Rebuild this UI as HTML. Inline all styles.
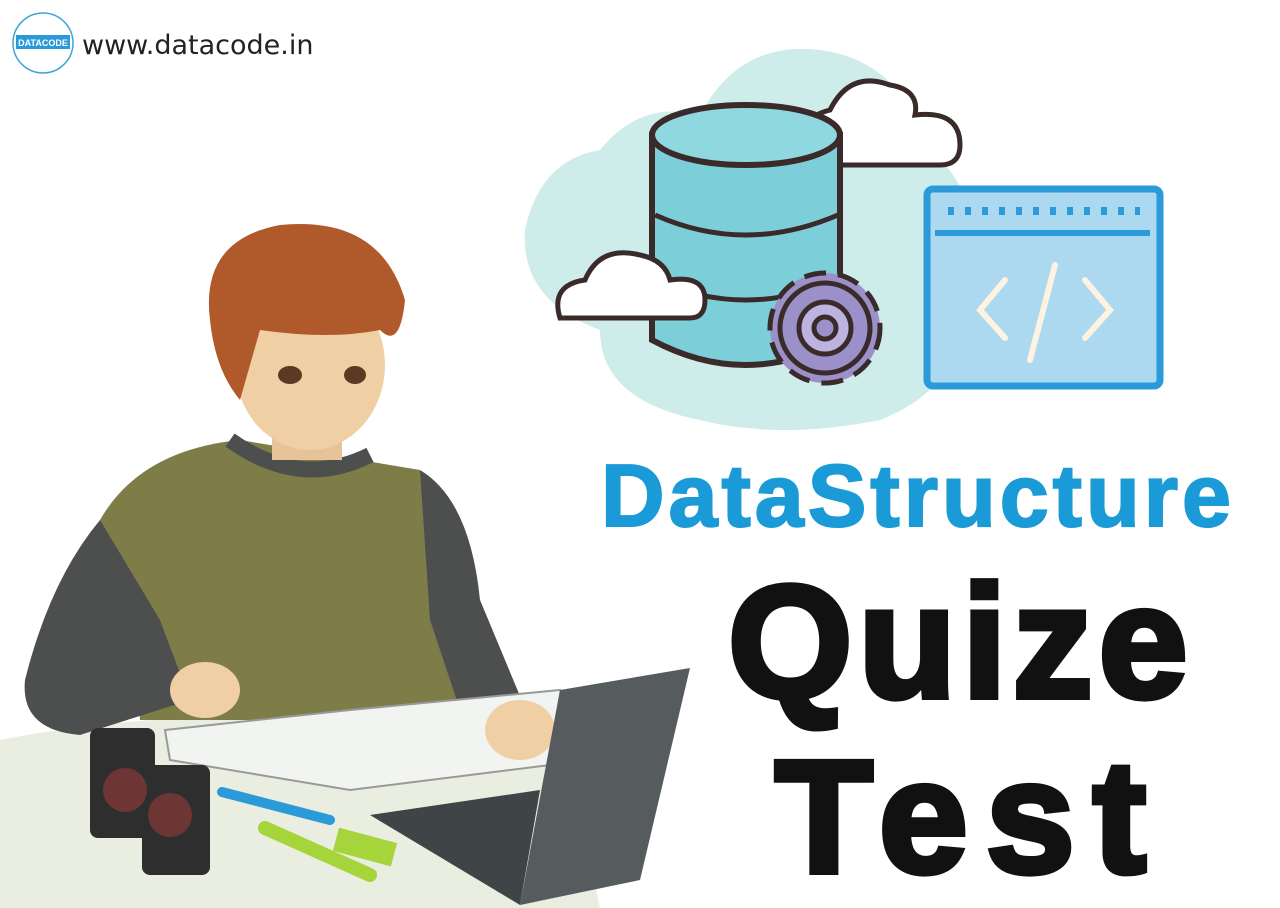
<!DOCTYPE html>
<html><head><meta charset="utf-8"><style>
body{margin:0;width:1280px;height:908px;background:#fff;overflow:hidden;position:relative;font-family:"Liberation Sans",sans-serif}
.t{position:absolute;font-weight:bold;white-space:nowrap;line-height:1}
</style></head><body>
<svg width="1280" height="908" style="position:absolute;left:0;top:0">
<circle cx="43" cy="43" r="30" fill="#fff" stroke="#3da4db" stroke-width="1.5"/>
<rect x="16" y="35" width="54" height="14" fill="#2b9ad8"/>
<text x="43" y="46" font-size="9" font-weight="bold" fill="#fff" text-anchor="middle" font-family="Liberation Sans">DATACODE</text>
<text x="82" y="54" font-size="27" fill="#222" font-family="DejaVu Sans">www.datacode.in</text>
<path d="M600 150 Q640 100 700 115 Q740 40 820 50 Q900 60 930 150 Q990 200 960 280 Q980 380 880 420 Q780 440 700 420 Q600 400 600 330 Q520 300 525 230 Q540 160 600 150Z" fill="#cdecea"/>
<path d="M800 165 Q790 120 830 110 Q850 70 890 85 Q920 90 915 115 Q960 110 960 145 Q960 165 940 165Z" fill="#fff" stroke="#3a2a2a" stroke-width="5"/>
<path d="M652 135 L652 340 Q745 390 840 340 L840 135Z" fill="#7ccfd8" stroke="#3a2a2a" stroke-width="6"/>
<ellipse cx="746" cy="135" rx="94" ry="30" fill="#8fd8e0" stroke="#3a2a2a" stroke-width="6"/>
<path d="M655 215 Q745 255 838 215 M655 280 Q745 320 838 280" fill="none" stroke="#3a2a2a" stroke-width="5"/>
<path d="M560 318 Q550 285 585 280 Q600 245 640 255 Q665 260 670 280 Q705 275 705 300 Q705 318 690 318Z" fill="#fff" stroke="#3a2a2a" stroke-width="5"/>
<circle cx="825" cy="328" r="55" fill="#9c90c9" stroke="#3a2a2a" stroke-width="5" stroke-dasharray="22 12"/>
<circle cx="825" cy="328" r="45" fill="#9c90c9" stroke="#3a2a2a" stroke-width="5"/>
<circle cx="825" cy="328" r="26" fill="#bdb3e0" stroke="#3a2a2a" stroke-width="5"/>
<circle cx="825" cy="328" r="11" fill="#9c90c9" stroke="#3a2a2a" stroke-width="5"/>
<rect x="927" y="189" width="233" height="197" rx="6" fill="#acd8f0" stroke="#2b9ad8" stroke-width="7"/>
<line x1="935" y1="233" x2="1150" y2="233" stroke="#2b9ad8" stroke-width="6"/>
<line x1="948" y1="211" x2="1140" y2="211" stroke="#2b9ad8" stroke-width="8" stroke-dasharray="6 11"/>
<path d="M1005 280 L980 310 L1005 338 M1085 280 L1110 310 L1085 338 M1055 265 L1030 360" fill="none" stroke="#fdf3e0" stroke-width="6" stroke-linecap="round"/>
<path d="M0 740 Q200 700 560 720 L600 908 L0 908Z" fill="#e9eee0"/>
<path d="M100 520 Q140 450 240 440 L420 470 Q470 520 470 620 L470 720 L140 720 Q130 600 100 520Z" fill="#7f7d47"/>
<path d="M100 520 Q50 580 25 680 Q20 730 80 735 L190 700 L160 620Z" fill="#4d4f4f"/>
<path d="M420 470 Q470 500 480 600 L530 720 L470 740 L430 620Z" fill="#4d4f4f"/>
<path d="M230 440 Q300 490 370 455" fill="none" stroke="#4d4f4f" stroke-width="16"/>
<rect x="272" y="380" width="70" height="80" fill="#e8c39a"/>
<ellipse cx="310" cy="365" rx="75" ry="85" fill="#f0cfa4"/>
<path d="M210 320 Q200 240 280 225 Q380 215 405 300 Q400 350 380 330 Q330 340 260 330 L240 400 Q215 370 210 320Z" fill="#b05a2b"/>
<ellipse cx="290" cy="375" rx="12" ry="9" fill="#5a3a25"/>
<ellipse cx="355" cy="375" rx="11" ry="9" fill="#5a3a25"/>
<path d="M165 730 L350 710 L560 690 L590 760 L350 790 L170 760Z" fill="#f2f4f2" stroke="#999" stroke-width="2"/>
<ellipse cx="205" cy="690" rx="35" ry="28" fill="#f0cfa4"/>
<ellipse cx="520" cy="730" rx="35" ry="30" fill="#f0cfa4"/>
<path d="M560 690 L690 668 L640 880 L520 905Z" fill="#565c5e"/>
<path d="M370 815 L540 790 L520 905 Z" fill="#3f4446"/>
<rect x="90" y="728" width="65" height="110" rx="8" fill="#2e2e2e"/>
<rect x="142" y="765" width="68" height="110" rx="8" fill="#2e2e2e"/>
<circle cx="125" cy="790" r="22" fill="#6e3535"/>
<circle cx="170" cy="815" r="22" fill="#6e3535"/>
<path d="M222 792 L330 820" stroke="#2b9ad8" stroke-width="10" stroke-linecap="round"/>
<path d="M265 828 L370 875" stroke="#a5d43b" stroke-width="14" stroke-linecap="round"/>
<rect x="335" y="835" width="60" height="24" fill="#a5d43b" transform="rotate(15 365 847)"/>
</svg>
<div class="t" style="left:601px;top:452px;font-size:88px;letter-spacing:4px;color:#1a9ad6;-webkit-text-stroke:2px #1a9ad6">DataStructure</div>
<div class="t" style="left:728px;top:562px;font-size:160px;letter-spacing:6px;color:#111;-webkit-text-stroke:6px #111">Quize</div>
<div class="t" style="left:775px;top:737px;font-size:160px;letter-spacing:18px;color:#111;-webkit-text-stroke:6px #111">Test</div>
</body></html>
